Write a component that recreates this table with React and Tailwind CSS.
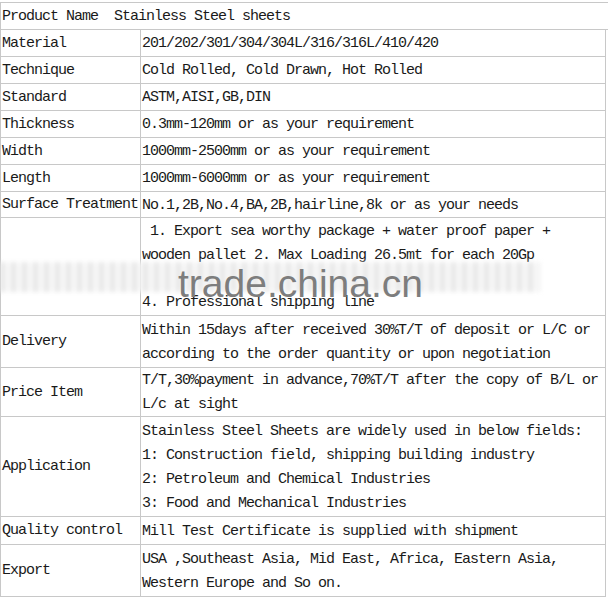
import React from "react";

const rows = [
  { label: "Material", h: "h-[27px]", lines: ["201/202/301/304/304L/316/316L/410/420"] },
  { label: "Technique", h: "h-[27px]", lines: ["Cold Rolled, Cold Drawn, Hot Rolled"] },
  { label: "Standard", h: "h-[27px]", lines: ["ASTM,AISI,GB,DIN"] },
  { label: "Thickness", h: "h-[27px]", lines: ["0.3mm-120mm or as your requirement"] },
  { label: "Width", h: "h-[27px]", lines: ["1000mm-2500mm or as your requirement"] },
  { label: "Length", h: "h-[27px]", lines: ["1000mm-6000mm or as your requirement"] },
  { label: "Surface Treatment", h: "h-[26px]", lines: ["No.1,2B,No.4,BA,2B,hairline,8k or as your needs"] },
  {
    label: "",
    h: "h-[98px]",
    lines: [
      " 1. Export sea worthy package + water proof paper +",
      "wooden pallet 2. Max Loading 26.5mt for each 20Gp",
      "",
      "4. Professional shipping line",
    ],
  },
  {
    label: "Delivery",
    h: "h-[52px]",
    lines: [
      "Within 15days after received 30%T/T of deposit or L/C or",
      "according to the order quantity or upon negotiation",
    ],
  },
  {
    label: "Price Item",
    h: "h-[49px]",
    lines: [
      "T/T,30%payment in advance,70%T/T after the copy of B/L or",
      "L/c at sight",
    ],
  },
  {
    label: "Application",
    h: "h-[100px]",
    lines: [
      "Stainless Steel Sheets are widely used in below fields:",
      "1: Construction field, shipping building industry",
      "2: Petroleum and Chemical Industries",
      "3: Food and Mechanical Industries",
    ],
  },
  { label: "Quality control", h: "h-[28px]", lines: ["Mill Test Certificate is supplied with shipment"] },
  {
    label: "Export",
    h: "h-[52px]",
    lines: [
      "USA ,Southeast Asia, Mid East, Africa, Eastern Asia,",
      "Western Europe and So on.",
    ],
  },
];

export default function App() {
  return (
    <div className="relative w-[608px] h-[597px] bg-white pt-[2px] overflow-hidden font-['Liberation_Mono',monospace] text-[15px] tracking-[-1px] text-[#1a1a1a]">
      {/* header row, no column divider */}
      <div className="flex items-center pt-[2px] h-[28px] w-[608px] border-t border-b border-l border-[#c8c8c8] pl-[1px] whitespace-pre">
        Product Name  Stainless Steel sheets
      </div>

      {rows.map((r, i) => (
        <div key={i} className={`flex w-[606px] ${r.h} border-l border-r border-b border-[#c8c8c8]`}>
          <div className="w-[140px] shrink-0 flex items-center pt-[2px] border-r border-[#c8c8c8] pl-[1px] whitespace-pre">
            {r.label}
          </div>
          <div className="flex-1 flex flex-col justify-center pt-[2px] pl-[1px]">
            {r.lines.map((t, j) => (
              <div key={j} className="h-[24px] leading-[24px] whitespace-pre">
                {t}
              </div>
            ))}
          </div>
        </div>
      ))}

      {/* watermark band */}
      <div className="absolute left-0 top-[262px] w-[540px] h-[30px] blur-[2px] opacity-80 bg-[repeating-linear-gradient(90deg,#e2e2e2_0px,#e2e2e2_5px,#f6f6f6_5px,#f6f6f6_11px)]" />
      <div className="absolute left-[178px] top-[264px] font-['Liberation_Sans',Arial,sans-serif] text-[39px] leading-none tracking-normal text-[#7d7d7d]">
        trade.china.cn
      </div>
    </div>
  );
}
